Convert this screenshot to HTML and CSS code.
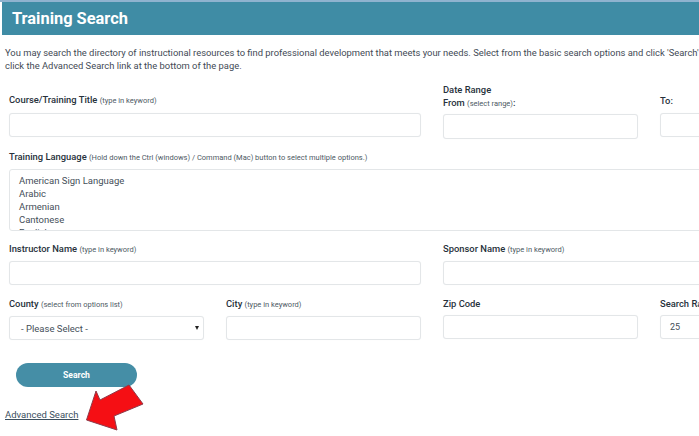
FILE: index.html
```html
<!DOCTYPE html>
<html lang="en">
<head>
    <meta charset="UTF-8">
    <title>Training Search</title>
    <link rel="stylesheet" href="styles.css">
</head>
<body>
    <div class="page">
        <h1 class="page-title">Training Search</h1>
        <p class="intro">You may search the directory of instructional resources to find professional development that meets your needs. Select from the basic search options and click 'Search'. Or<br>click the Advanced Search link at the bottom of the page.</p>

        <form class="search-form">
            <div class="field span-2 end">
                <label>Course/Training Title <small>(type in keyword)</small></label>
                <div class="text-box"></div>
            </div>
            <div class="field end date-from">
                <label>Date Range<br>From <small>(select range)</small>:</label>
                <div class="text-box"></div>
            </div>
            <div class="field end">
                <label>To:</label>
                <div class="text-box"></div>
            </div>

            <div class="field span-4 language">
                <label>Training Language <small>(Hold down the Ctrl (windows) / Command (Mac) button to select multiple options.)</small></label>
                <div class="list-box">
                    <div>American Sign Language</div>
                    <div>Arabic</div>
                    <div>Armenian</div>
                    <div>Cantonese</div>
                    <div>English</div>
                </div>
            </div>

            <div class="field span-2">
                <label>Instructor Name <small>(type in keyword)</small></label>
                <div class="text-box"></div>
            </div>
            <div class="field span-2">
                <label>Sponsor Name <small>(type in keyword)</small></label>
                <div class="text-box"></div>
            </div>

            <div class="field">
                <label>County <small>(select from options list)</small></label>
                <div class="text-box select-box">- Please Select -<span class="caret"></span></div>
            </div>
            <div class="field">
                <label>City <small>(type in keyword)</small></label>
                <div class="text-box"></div>
            </div>
            <div class="field">
                <label>Zip Code</label>
                <div class="text-box"></div>
            </div>
            <div class="field">
                <label>Search Radius</label>
                <div class="text-box value">25</div>
            </div>
        </form>

        <button type="button" class="search-button">Search</button>
        <a class="advanced-link" href="#">Advanced Search</a>

        <svg class="red-arrow" width="60" height="48" viewBox="0 0 60 48">
            <polygon points="1.5,31 11,2 15,11 44,-4 58,15 29,27 32,41" fill="#f50f14" stroke="#8e3a4a" stroke-width="1"/>
        </svg>
    </div>
</body>
</html>
```

FILE: styles.css
```css
* { box-sizing: border-box; }
html, body { margin: 0; height: 100%; overflow: hidden; background: #fff; }
body { font-family: Roboto, "Liberation Sans", sans-serif; color: #3c4650; font-size: 10px; }

.page { position: relative; width: 699px; height: 436px; overflow: hidden; border-top: 2px solid #8fb3cf; }

.page-title { margin: 0 0 0 2px; height: 33px; padding-left: 10px; background: #3f8ca5; color: #fff; font-size: 16.4px; font-weight: 700; line-height: 33px; }

.intro { width: 760px; margin: 11px 0 0 5px; font-size: 9.4px; line-height: 13px; color: #3f4a55; }

.search-form { display: grid; grid-template-columns: repeat(4, 195px); column-gap: 22px; width: 846px; margin: 11px 0 0 9px; }

.field { display: flex; flex-direction: column; margin-bottom: 12px; }
.span-2 { grid-column: span 2; }
.span-4 { grid-column: span 4; }
.end { justify-content: flex-end; margin-bottom: 13px; }
.language { margin-bottom: 11px; }

.field label { font-size: 9.4px; font-weight: 500; line-height: 13px; color: #27313b; margin-bottom: 5px; }
.field label small { font-size: 7.5px; font-weight: 400; color: #4d5964; }
.end label { margin-bottom: 6px; }
.date-from { margin-bottom: 11px; }
.date-from label { margin-bottom: 4px; }

.text-box { height: 24px; border: 1px solid #e3e6e8; border-radius: 3px; background: #fff; box-shadow: 0 0 1px #eef0f1; }
.date-from .text-box { height: 25px; }

.list-box { height: 62px; overflow: hidden; padding: 4px 9px; border: 1px solid #e3e6e8; border-radius: 3px; font-size: 9.5px; line-height: 13px; color: #454f59; }

.select-box { position: relative; padding-left: 11px; font-size: 9.5px; line-height: 23px; color: #454f59; }
.caret { position: absolute; right: 4px; top: 9px; border-left: 2px solid transparent; border-right: 2px solid transparent; border-top: 4px solid #222; }
.value { padding-left: 9px; font-size: 9px; line-height: 23px; color: #454f59; }

.search-button { display: block; width: 121px; height: 24px; margin: 11px 0 0 16px; padding: 0; border: 0; border-radius: 12px; background: #458ea6; color: #fff; font-family: inherit; font-size: 8.6px; font-weight: 700; }

.advanced-link { display: inline-block; margin: 21px 0 0 5px; font-size: 9.5px; line-height: 13px; color: #3c4f5e; }

.red-arrow { position: absolute; left: 85px; top: 387px; overflow: visible; }
```
